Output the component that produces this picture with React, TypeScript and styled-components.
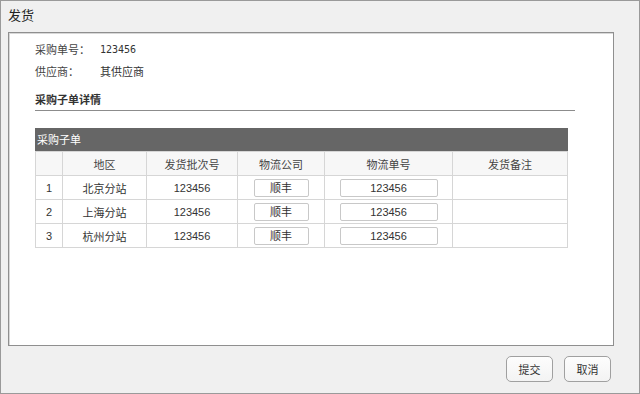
import styled, { createGlobalStyle } from 'styled-components';

const GlobalStyle = createGlobalStyle`
  html, body {
    margin: 0;
    padding: 0;
    background: #f0f0f0;
  }
  body {
    font-family: "Noto Sans CJK SC", "Liberation Sans", sans-serif;
    color: #333;
  }
`;

const Dialog = styled.div`
  box-sizing: border-box;
  width: 640px;
  height: 394px;
  border: 1px solid #9a9a9a;
  background: #f0f0f0;
  display: flex;
  flex-direction: column;
`;

const DialogTitle = styled.div`
  height: 31px;
  padding-left: 7px;
  font-size: 13px;
  line-height: 28px;
  color: #222;
`;

const Panel = styled.div`
  box-sizing: border-box;
  width: 606px;
  height: 314px;
  margin-left: 7px;
  border: 1px solid #8f8f8f;
  box-shadow: inset 1px 1px 0 #d8d8d8;
  background: #fff;
  padding: 5px 0 0 26px;
`;

const InfoRow = styled.div`
  display: flex;
  height: 22px;
  align-items: center;
  font-size: 11px;
`;

const InfoLabel = styled.span`
  width: 65px;
  color: #444;
`;

const InfoValue = styled.span<{ $mono?: boolean }>`
  color: #333;
  font-family: ${(p) =>
    p.$mono ? '"DejaVu Sans Mono", monospace' : '"Noto Sans CJK SC", sans-serif'};
  font-size: ${(p) => (p.$mono ? '10px' : '11px')};
`;

const SectionTitle = styled.div`
  margin-top: 6px;
  width: 540px;
  height: 22px;
  line-height: 22px;
  font-size: 11px;
  font-weight: bold;
  color: #333;
  border-bottom: 1px solid #8c8c8c;
`;

const TableBox = styled.div`
  margin-top: 17px;
  width: 533px;
`;

const TableCaption = styled.div`
  height: 23px;
  line-height: 23px;
  background: #666;
  color: #fff;
  font-size: 11px;
  padding-left: 2px;
`;

const Table = styled.table`
  width: 533px;
  border-collapse: collapse;
  table-layout: fixed;
  font-size: 11px;
`;

const HeadCell = styled.th<{ $w: number }>`
  width: ${(p) => p.$w}px;
  height: 23px;
  padding: 0;
  font-weight: normal;
  color: #444;
  background: #f7f7f7;
  border: 1px solid #d6d6d6;
`;

const Cell = styled.td`
  height: 23px;
  padding: 0;
  text-align: center;
  color: #333;
  border: 1px solid #d6d6d6;
  font-family: "Liberation Sans", "Noto Sans CJK SC", sans-serif;
`;

const CellInput = styled.div<{ $w: number }>`
  box-sizing: border-box;
  width: ${(p) => p.$w}px;
  height: 18px;
  margin: 0 auto;
  line-height: 16px;
  border: 1px solid #c8c8c8;
  border-radius: 2px;
  background: #fff;
  text-align: center;
`;

const Footer = styled.div`
  display: flex;
  justify-content: flex-end;
  gap: 11px;
  padding: 10px 28px 0 0;
`;

const Button = styled.button`
  box-sizing: border-box;
  width: 47px;
  height: 26px;
  padding: 0;
  border: 1px solid #a0a0a0;
  border-radius: 5px;
  background: linear-gradient(#fdfdfd, #f3f3f3);
  font-family: "Noto Sans CJK SC", sans-serif;
  font-size: 11px;
  color: #333;
`;

const columns = [
  { title: '', w: 26 },
  { title: '地区', w: 83 },
  { title: '发货批次号', w: 90 },
  { title: '物流公司', w: 86 },
  { title: '物流单号', w: 127 },
  { title: '发货备注', w: 114 },
];

const rows = [
  { no: 1, area: '北京分站', batch: '123456', company: '顺丰', code: '123456' },
  { no: 2, area: '上海分站', batch: '123456', company: '顺丰', code: '123456' },
  { no: 3, area: '杭州分站', batch: '123456', company: '顺丰', code: '123456' },
];

export default function App() {
  return (
    <>
      <GlobalStyle />
      <Dialog>
        <DialogTitle>发货</DialogTitle>
        <Panel>
          <InfoRow>
            <InfoLabel>采购单号：</InfoLabel>
            <InfoValue $mono>123456</InfoValue>
          </InfoRow>
          <InfoRow>
            <InfoLabel>供应商：</InfoLabel>
            <InfoValue>其供应商</InfoValue>
          </InfoRow>
          <SectionTitle>采购子单详情</SectionTitle>
          <TableBox>
            <TableCaption>采购子单</TableCaption>
            <Table>
              <thead>
                <tr>
                  {columns.map((c, i) => (
                    <HeadCell key={i} $w={c.w}>
                      {c.title}
                    </HeadCell>
                  ))}
                </tr>
              </thead>
              <tbody>
                {rows.map((r) => (
                  <tr key={r.no}>
                    <Cell>{r.no}</Cell>
                    <Cell>{r.area}</Cell>
                    <Cell>{r.batch}</Cell>
                    <Cell>
                      <CellInput $w={55}>{r.company}</CellInput>
                    </Cell>
                    <Cell>
                      <CellInput $w={98}>{r.code}</CellInput>
                    </Cell>
                    <Cell />
                  </tr>
                ))}
              </tbody>
            </Table>
          </TableBox>
        </Panel>
        <Footer>
          <Button>提交</Button>
          <Button>取消</Button>
        </Footer>
      </Dialog>
    </>
  );
}
